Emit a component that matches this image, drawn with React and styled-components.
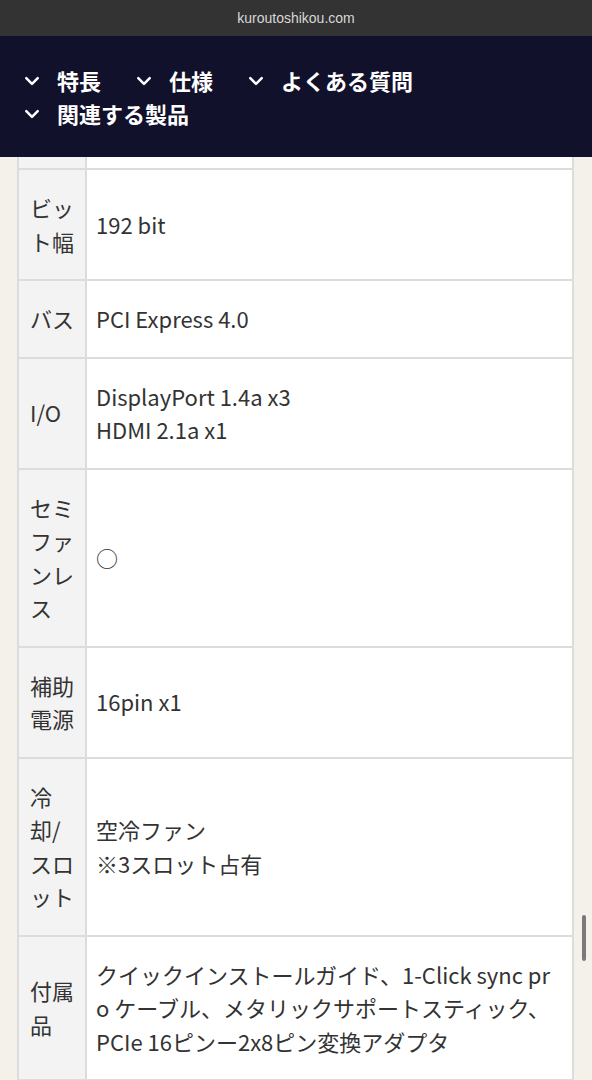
import React from 'react'
import styled, { createGlobalStyle } from 'styled-components';

const GlobalStyle = createGlobalStyle`
  html, body {
    margin: 0;
    padding: 0;
    background: #f4f1eb;
  }
  body {
    font-family: "Noto Sans CJK JP", "Noto Sans", sans-serif;
    color: #333;
  }
`;

const navItems = ['特長', '仕様', 'よくある質問', '関連する製品'];

const specs = [
  { label: 'ビット幅', value: ['192 bit'] },
  { label: 'バス', value: ['PCI Express 4.0'] },
  { label: 'I/O', value: ['DisplayPort 1.4a x3', 'HDMI 2.1a x1'] },
  { label: 'セミファンレス', value: ['○'] },
  { label: '補助電源', value: ['16pin x1'] },
  { label: '冷却/スロット', value: ['空冷ファン', '※3スロット占有'] },
  {
    label: '付属品',
    value: ['クイックインストールガイド、1-Click sync pro ケーブル、メタリックサポートスティック、PCIe 16ピンー2x8ピン変換アダプタ'],
  },
];

const Chevron = () => (
  <ChevronSvg viewBox="0 0 14 10" aria-hidden="true">
    <path d="M2 2.5 L7 7.5 L12 2.5" fill="none" stroke="#fff" strokeWidth="2.2" strokeLinecap="round" strokeLinejoin="round" />
  </ChevronSvg>
);

export default function App() {
  return (
    <Screen>
      <GlobalStyle />
      <UrlBar>kuroutoshikou.com</UrlBar>
      <Nav>
        {navItems.map((item) => (
          <NavItem key={item}>
            <Chevron />
            <span>{item}</span>
          </NavItem>
        ))}
      </Nav>
      <Content>
        <SpecTable>
          <colgroup>
            <Col $w="68px" />
            <col />
          </colgroup>
          <tbody>
            <tr>
              <LabelCell $stub />
              <ValueCell $stub />
            </tr>
            {specs.map((row) => (
              <tr key={row.label}>
                <LabelCell>{row.label}</LabelCell>
                <ValueCell>
                  {row.value.map((line, i) => (
                    <Line key={i}>{line}</Line>
                  ))}
                </ValueCell>
              </tr>
            ))}
          </tbody>
        </SpecTable>
      </Content>
      <ScrollThumb />
    </Screen>
  )
}

const Screen = styled.div`
  position: relative;
  width: 592px;
  height: 1080px;
  overflow: hidden;
  background: #f4f1eb;
`;

const UrlBar = styled.div`
  height: 36px;
  background: #333333;
  color: #d8d8d8;
  font-family: "Liberation Sans", "Noto Sans", sans-serif;
  font-size: 14px;
  display: flex;
  align-items: center;
  justify-content: center;
`;

const Nav = styled.nav`
  height: 121px;
  box-sizing: border-box;
  background: #11112b;
  padding: 28px 20px 0 24px;
  display: flex;
  flex-wrap: wrap;
  align-content: flex-start;
  column-gap: 35px;
`;

const NavItem = styled.div`
  display: flex;
  align-items: center;
  gap: 17px;
  color: #fff;
  font-size: 22px;
  font-weight: 700;
  line-height: 33px;
`;

const ChevronSvg = styled.svg`
  width: 16px;
  height: 12px;
  flex: none;
`;

const Content = styled.div`
  padding: 0 18px 0 17px;
`;

const SpecTable = styled.table`
  width: 100%;
  border-collapse: collapse;
  table-layout: fixed;
  font-size: 22px;
  line-height: 33.5px;
`;

const Col = styled.col`
  width: ${(p) => p.$w};
`;

const LabelCell = styled.th`
  padding: ${(p) => (p.$stub ? '0' : '21px 10px 21px 11px')};
  height: ${(p) => (p.$stub ? '11px' : 'auto')};
  background: #f3f3f3;
  border: 2px solid #dcdcdc;
  border-top: ${(p) => (p.$stub ? 'none' : '2px solid #dcdcdc')};
  text-align: left;
  font-weight: 400;
  color: #333;
  vertical-align: middle;
`;

const ValueCell = styled.td`
  padding: ${(p) => (p.$stub ? '0' : '21px 12px 21px 9px')};
  background: #fff;
  border: 2px solid #dcdcdc;
  border-top: ${(p) => (p.$stub ? 'none' : '2px solid #dcdcdc')};
  color: #333;
  vertical-align: middle;
  word-break: break-all;
`;

const Line = styled.div``;

const ScrollThumb = styled.div`
  position: absolute;
  right: 6px;
  top: 915px;
  width: 4px;
  height: 46px;
  border-radius: 2px;
  background: #7a7a7a;
`;
